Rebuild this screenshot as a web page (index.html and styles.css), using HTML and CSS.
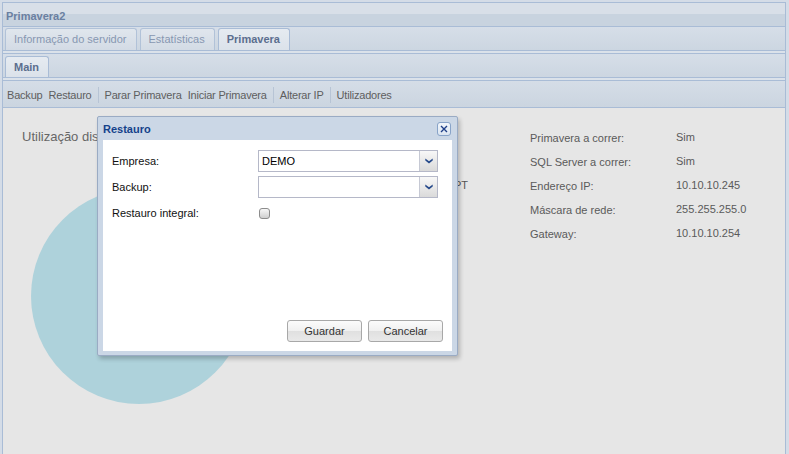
FILE: index.html
```html
<!DOCTYPE html>
<html lang="pt">
<head>
<meta charset="utf-8">
<title>Primavera2</title>
<link rel="stylesheet" href="styles.css">
</head>
<body>
<div class="app">
  <div class="hdr">Primavera2</div>
  <div class="tabstrip">
    <div class="tab">Informação do servidor</div>
    <div class="tab">Estatísticas</div>
    <div class="tab active">Primavera</div>
  </div>
  <div class="tabgap"></div>
  <div class="inner">
    <div class="tabstrip sub">
      <div class="tab active">Main</div>
    </div>
    <div class="tabgap"></div>
    <div class="toolbar">
      <span class="btn">Backup</span><span class="btn">Restauro</span><span class="sep"></span><span class="btn">Parar Primavera</span><span class="btn">Iniciar Primavera</span><span class="sep"></span><span class="btn">Alterar IP</span><span class="sep"></span><span class="btn">Utilizadores</span>
    </div>
    <div class="content">
      <div class="chart">
        <div class="chart-title">Utilização disco</div>
        <svg class="pie" width="500" height="300" viewBox="0 0 500 300">
          <circle cx="136" cy="152" r="108" fill="#aed2db"/>
          <text x="465" y="45" text-anchor="end" class="legend">Espaço livre PT</text>
        </svg>
      </div>
      <div class="info">
        <div class="lbl">Primavera a correr:</div><div class="val">Sim</div>
        <div class="lbl">SQL Server a correr:</div><div class="val">Sim</div>
        <div class="lbl">Endereço IP:</div><div class="val">10.10.10.245</div>
        <div class="lbl">Máscara de rede:</div><div class="val">255.255.255.0</div>
        <div class="lbl">Gateway:</div><div class="val">10.10.10.254</div>
      </div>
    </div>
  </div>
</div>

<div class="dialog">
  <div class="dlg-head">
    <span class="dlg-title">Restauro</span>
    <span class="dlg-close"><svg width="14" height="14" viewBox="0 0 14 14"><path d="M3.5 3.5 L10.5 10.5 M10.5 3.5 L3.5 10.5" stroke="#1f3f88" stroke-width="1.6" fill="none"/></svg></span>
  </div>
  <div class="dlg-body">
    <div class="row">
      <label class="flbl">Empresa:</label>
      <div class="combo"><span class="combo-text">DEMO</span><span class="trigger"><svg width="8" height="6" viewBox="0 0 8 6"><path d="M0.3 0.6 L4 3.2 L7.7 0.6 L7.7 2.6 L4 5.4 L0.3 2.6Z" fill="#24488a"/></svg></span></div>
    </div>
    <div class="row">
      <label class="flbl">Backup:</label>
      <div class="combo"><span class="combo-text"></span><span class="trigger"><svg width="8" height="6" viewBox="0 0 8 6"><path d="M0.3 0.6 L4 3.2 L7.7 0.6 L7.7 2.6 L4 5.4 L0.3 2.6Z" fill="#24488a"/></svg></span></div>
    </div>
    <div class="row">
      <label class="flbl">Restauro integral:</label>
      <span class="check"></span>
    </div>
    <div class="buttons">
      <span class="button">Guardar</span>
      <span class="button">Cancelar</span>
    </div>
  </div>
</div>
</body>
</html>
```

FILE: styles.css
```css
html, body {
  margin: 0;
  padding: 0;
  height: 100%;
  overflow: hidden;
}
body {
  background: #d4dce7;
  font-family: "Liberation Sans", Arial, sans-serif;
  font-size: 11px;
  color: #555;
}
.app {
  margin: 2px 3px 0 2px;
  height: calc(100vh - 2px);
  box-sizing: border-box;
  border: 1px solid #a9bcd6;
  border-bottom: none;
  display: flex;
  flex-direction: column;
  background: #e6e6e6;
}
.hdr {
  height: 24px;
  box-sizing: border-box;
  padding: 2px 0 0 3px;
  line-height: 22px;
  font-weight: bold;
  color: #6a7fa1;
  background: linear-gradient(#d8dfe8 0, #d8dfe8 46%, #c8d3df 50%, #c8d3df 100%);
  border-bottom: 1px solid #a9bcd6;
}
.tabstrip {
  height: 24px;
  box-sizing: border-box;
  padding: 1px 0 0 2px;
  display: flex;
  gap: 3px;
  background: linear-gradient(#d6dee8, #ccd6e1);
  border-bottom: 1px solid #a9bcd6;
}
.tab {
  height: 22px;
  box-sizing: border-box;
  line-height: 20px;
  padding: 0 9px 0 8px;
  border: 1px solid #b1c2d8;
  border-bottom: none;
  border-radius: 3px 3px 0 0;
  background: linear-gradient(#e0e6ed, #d3dbe5);
  color: #8797b1;
}
.tab.active {
  background: linear-gradient(#e6ebf1, #dbe2ea);
  color: #5b6e8e;
  font-weight: bold;
  border-color: #a9bcd6;
}
.tabstrip.sub {
  height: 24px;
  padding-top: 2px;
}
.tabstrip.sub .tab {
  height: 21px;
  line-height: 20px;
}
.tabgap {
  height: 2px;
  background: #dbe2ea;
}
.inner {
  flex: 1;
  display: flex;
  flex-direction: column;
  border-top: 1px solid #a9bcd6;
}
.toolbar {
  height: 28px;
  box-sizing: border-box;
  border-top: 1px solid #a9bcd6;
  border-bottom: 1px solid #a9bcd6;
  background: linear-gradient(#d5dde7, #cbd5e0);
  display: flex;
  align-items: center;
  padding: 1px 0 0 1px;
  color: #5e5e5e;
  letter-spacing: -0.2px;
}
.btn {
  padding: 0 3px;
  line-height: 16px;
}
.sep {
  width: 1px;
  height: 16px;
  margin: 0 3px;
  background: #b7c4d5;
}
.content {
  flex: 1;
  display: flex;
  background: #e6e6e6;
}
.chart {
  flex: 0 0 527px;
}
.chart-title {
  padding: 21px 0 0 19px;
  font-size: 13px;
  line-height: 15px;
  color: #666;
}
.pie {
  display: block;
}
.legend {
  font-family: "Liberation Sans", Arial, sans-serif;
  font-size: 11px;
  fill: #555;
}
.info {
  padding-top: 18px;
  display: grid;
  grid-template-columns: 146px auto;
  grid-auto-rows: 24px;
  align-content: start;
  align-items: center;
  color: #5a5a5a;
}
.val {
  margin-top: -2px;
}

/* Dialog */
.dialog {
  position: absolute;
  left: 97px;
  top: 116px;
  width: 361px;
  height: 240px;
  box-sizing: border-box;
  border: 1px solid #9aabc4;
  border-radius: 2px;
  background: #cbd7e6;
  padding: 0 5px 4px 5px;
  display: flex;
  flex-direction: column;
  box-shadow: 2px 3px 4px rgba(0, 0, 0, 0.22);
}
.dlg-head {
  height: 23px;
  display: flex;
  align-items: center;
  justify-content: space-between;
}
.dlg-title {
  font-weight: bold;
  color: #15428b;
  font-size: 11px;
}
.dlg-close {
  width: 14px;
  height: 14px;
  box-sizing: border-box;
  border: 1px solid #88a3c8;
  border-radius: 3px;
  background: linear-gradient(#f2f6fb, #dbe5f1);
  display: flex;
  align-items: center;
  justify-content: center;
  margin-right: 1px;
  margin-top: 1px;
}
.dlg-close svg {
  width: 12px;
  height: 12px;
}
.dlg-body {
  flex: 1;
  background: #fff;
  padding: 10px 9px 9px 9px;
  display: flex;
  flex-direction: column;
  color: #000;
}
.row {
  height: 22px;
  margin-bottom: 4px;
  display: flex;
  align-items: center;
}
.flbl {
  width: 146px;
  flex: 0 0 146px;
  color: #111;
}
.combo {
  width: 180px;
  height: 22px;
  box-sizing: border-box;
  border: 1px solid #b5b8c8;
  display: flex;
  background: #fff;
}
.combo-text {
  flex: 1;
  padding-left: 3px;
  line-height: 20px;
  color: #000;
}
.trigger {
  width: 17px;
  border-left: 1px solid #c6c9d4;
  background: linear-gradient(#f8f8f8, #dadada);
  display: flex;
  align-items: center;
  justify-content: center;
}
.check {
  width: 11px;
  height: 11px;
  box-sizing: border-box;
  margin-left: 1px;
  border: 1px solid #8c8c8c;
  border-radius: 3px;
  background: linear-gradient(#f7f7f7, #cfcfcf);
}
.buttons {
  margin-top: auto;
  display: flex;
  justify-content: flex-end;
  gap: 6px;
}
.button {
  width: 75px;
  height: 22px;
  box-sizing: border-box;
  border: 1px solid #a8a8a8;
  border-radius: 3px;
  background: linear-gradient(#fbfbfb 0, #f0f0f0 50%, #e0e0e0 51%, #e9e9e9 100%);
  text-align: center;
  line-height: 20px;
  color: #333;
}
```
